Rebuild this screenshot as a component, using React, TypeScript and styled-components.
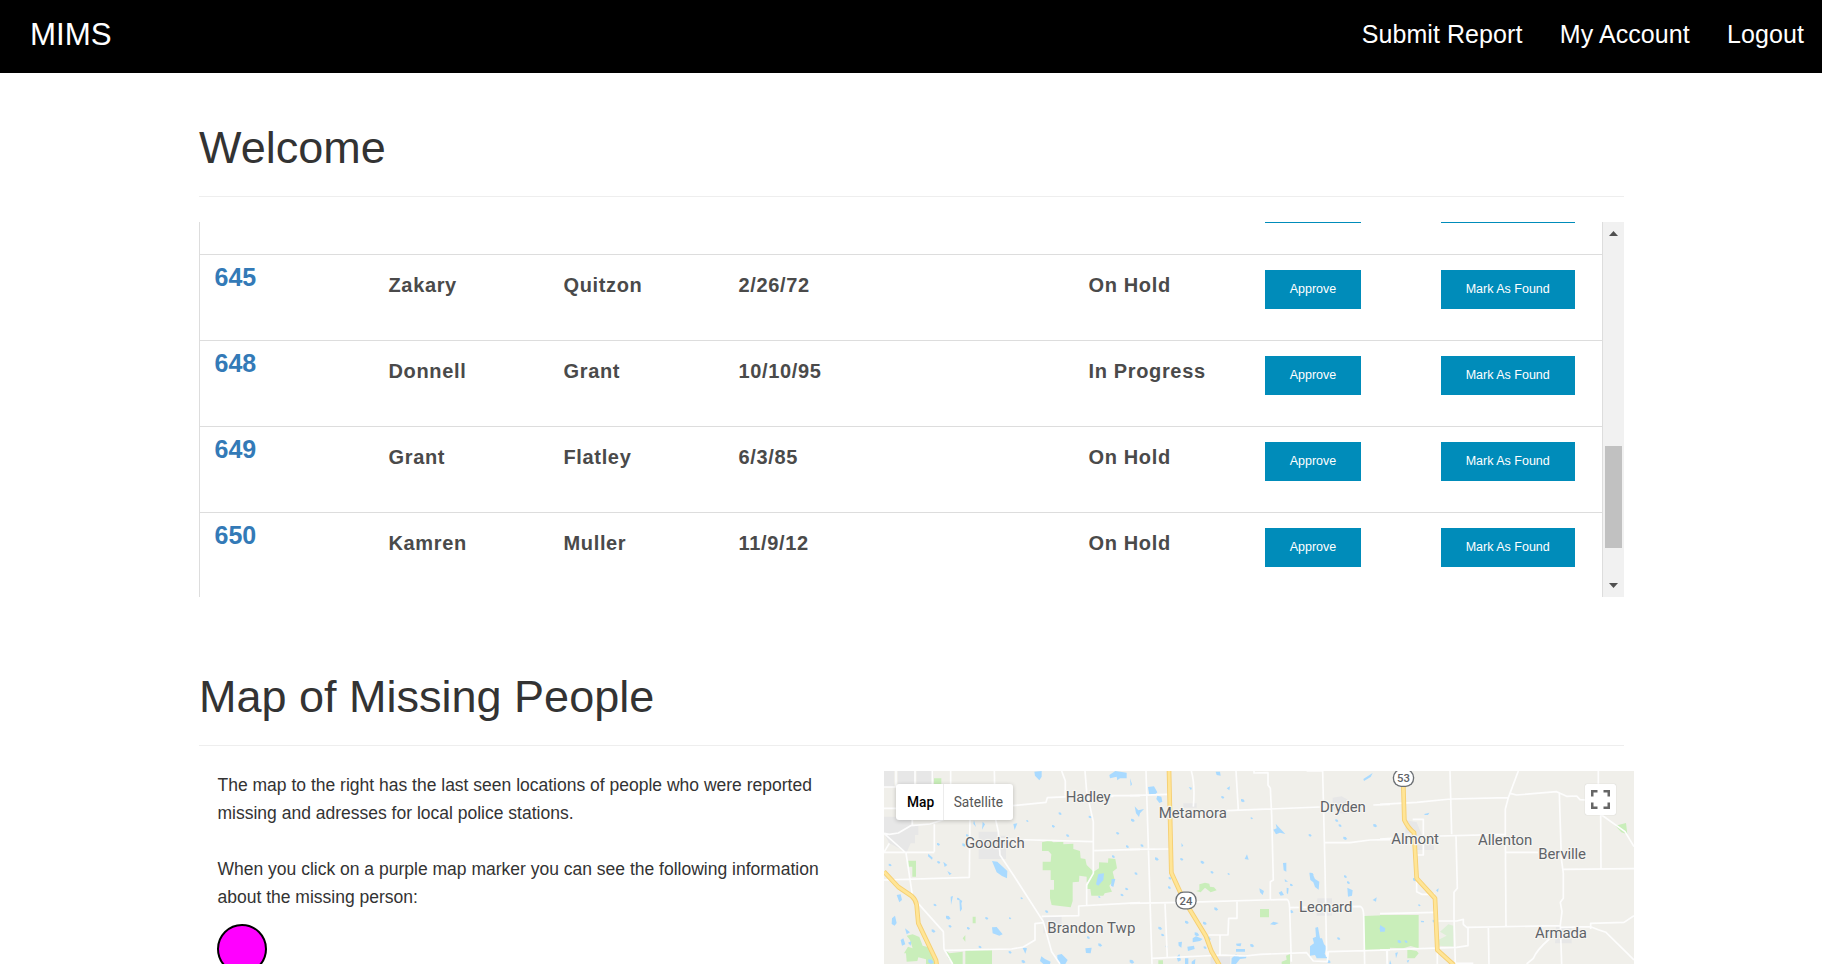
import React from 'react';
import styled, { createGlobalStyle } from 'styled-components';

const GlobalStyle = createGlobalStyle`
  *, *::before, *::after { box-sizing: border-box; }
  body {
    margin: 0;
    background: #fff;
    color: #333;
    font-family: 'Liberation Sans', Arial, sans-serif;
    overflow: hidden;
  }
`;

const Page = styled.div`
  height: 964px;
  overflow: hidden;
`;

const Navbar = styled.nav`
  display: flex;
  justify-content: space-between;
  align-items: center;
  height: 73px;
  padding: 0 18px 6px 30px;
  background: #000;
  color: #fff;
`;

const Brand = styled.span`
  padding-top: 2px;
  font-size: 31.25px;
  line-height: 40px;
`;

const NavLinks = styled.div`
  display: flex;
  gap: 37.25px;
`;

const NavLink = styled.a`
  font-size: 25px;
  line-height: 40px;
  letter-spacing: 0.08px;
  color: #fff;
`;

const Container = styled.main`
  width: 1425px;
  margin-left: 199px;
`;

const Heading = styled.h1<{ $top: number }>`
  margin: 0;
  padding: ${(p) => p.$top}px 0 23px;
  border-bottom: 1px solid #eee;
  font-size: 45px;
  font-weight: 400;
  line-height: 50px;
`;

const TableArea = styled.section`
  display: flex;
  height: 375px;
  margin-top: 25px;
  overflow: hidden;
`;

const Rows = styled.div`
  width: 1404px;
  border: solid #ddd;
  border-width: 0 1px;
`;

const Row = styled.div<{ $scrolled?: boolean }>`
  display: grid;
  grid-template-columns: 176.5px repeat(4, 175px) 176.5px 175.5px 163px;
  align-items: start;
  height: 86px;
  margin-top: ${(p) => (p.$scrolled ? -54 : 0)}px;
  padding-left: 12px;
  border-top: 1px solid #ddd;
`;

const CaseLink = styled.a`
  padding: 8px 0 0 2.5px;
  color: #337ab7;
  font-size: 25px;
  font-weight: 700;
  line-height: 28px;
`;

const Cell = styled.span`
  padding-top: 16px;
  color: #4a4a4a;
  font-size: 20px;
  font-weight: 700;
  line-height: 28px;
  letter-spacing: 0.65px;
`;

const ActionButton = styled.button<{ $width: number }>`
  justify-self: start;
  width: ${(p) => p.$width}px;
  height: 39px;
  margin: 15px 0 0;
  padding: 0 0 2px;
  border: 0;
  background: #008cba;
  color: #fff;
  font: 12.5px/36px 'Liberation Sans', Arial, sans-serif;
  white-space: nowrap;
`;

const ScrollTrack = styled.div`
  display: flex;
  flex-direction: column;
  align-items: center;
  justify-content: space-between;
  width: 21px;
  padding: 9px 0;
  background: #f1f1f1;
`;

const ScrollThumb = styled.div`
  width: 17px;
  height: 102px;
  margin: 175px 0 0;
  background: #c1c1c1;
`;

const ArrowSvg = styled.svg`
  display: block;
  flex: none;
`;

const MapSection = styled.section`
  display: flex;
  justify-content: space-between;
  width: 1435px;
  margin-top: 25px;
`;

const Description = styled.div`
  width: 640px;
  padding-left: 18px;
`;

const Paragraph = styled.p`
  margin: 0 0 28px;
  padding-left: 0.5px;
  font-size: 17.5px;
  line-height: 28px;
`;

const Marker = styled.div`
  width: 50px;
  height: 50px;
  margin-top: -15px;
  border: 2px solid #000;
  border-radius: 50%;
  background: #f0f;
`;

const MapFrame = styled.div`
  position: relative;
  width: 750px;
  height: 193px;
  overflow: hidden;
  background: #f0efea;
`;

const MapDrawing = styled.svg`
  display: block;
`;

const MapTypes = styled.div`
  position: absolute;
  left: 12px;
  top: 13px;
  display: flex;
  height: 36px;
  border-radius: 3px;
  background: #fff;
  box-shadow: 0 1px 4px rgba(0, 0, 0, 0.22);
`;

const MapType = styled.span<{ $active?: boolean }>`
  padding: ${(p) => (p.$active ? '0 9px 0 11px' : '0 10px 0 9.500px')};
  border-left: ${(p) => (p.$active ? '0' : '1px solid #ececec')};
  color: ${(p) => (p.$active ? '#000' : '#565656')};
  font: ${(p) => (p.$active ? 500 : 400)} 13.75px/36px Roboto, sans-serif;
`;

const Fullscreen = styled.button`
  position: absolute;
  right: 18px;
  top: 13px;
  display: grid;
  place-items: center;
  width: 31px;
  height: 31px;
  padding: 0;
  border: 0;
  border-radius: 2px;
  background: #fff;
  box-shadow: 0 0 1px rgba(0, 0, 0, 0.25);
`;

const MapLabel = styled.text`
  font: 45px Roboto, sans-serif;
  fill: #5f6368;
  stroke: #f6f5f1;
  stroke-width: 7px;
  stroke-linejoin: round;
  paint-order: stroke;
`;

const ShieldText = styled.text`
  font: 500 34px Roboto, sans-serif;
  fill: #5f6368;
  text-anchor: middle;
`;

type Person = { id: string; first: string; last: string; dob: string; status: string };

const people: Person[] = [
  { id: '645', first: 'Zakary', last: 'Quitzon', dob: '2/26/72', status: 'On Hold' },
  { id: '648', first: 'Donnell', last: 'Grant', dob: '10/10/95', status: 'In Progress' },
  { id: '649', first: 'Grant', last: 'Flatley', dob: '6/3/85', status: 'On Hold' },
  { id: '650', first: 'Kamren', last: 'Muller', dob: '11/9/12', status: 'On Hold' },
];

type Label = [name: string, x: number, y: number, width: number];

type Tile = {
  x: number;
  urban: string;
  parks: string;
  water: string;
  ponds: [number, number, number][];
  roads: string;
  highway: string;
  labels: Label[];
};

// The drawing is split in three tiles, each in units of a third of a pixel.
const tiles: Tile[] = [
  {
    x: -4,
    urban:
      'M12 18H42V66H12ZM54 18H104V66H54ZM110 18H160V57H110ZM12 155H94V180L115 178V210H105V235H92L80 262L28 235L12 205ZM296 200H355V212H378V282H296ZM490 452H545V478H520V505H490Z',
    parks:
      'M162 40H184V57H162ZM85 287H108V335H97V305H85ZM486 232L512 226L520 232L550 230V238L580 236V252L600 258L602 280L616 282L620 300L641 320L638 352H620V335L598 332L597 350L578 352V408L572 427L515 420L510 400V374H522V345H512V316H488V290H512L514 268L505 258H486ZM641 320L657 310V292L684 293L685 280L706 282L711 310L698 320L704 344L688 362L696 380L674 385L670 392H634L631 372H620L624 350L638 345ZM80 512L98 508L118 516L128 542L146 547L160 570L164 597H138V583L115 577L112 588L80 590L78 565H72L84 545L98 550L90 525ZM196 556L208 565L248 560V597H220L204 580ZM256 556H336V597H256ZM278 455H287V475H278ZM248 520L256 510V530Z',
    water:
      'M463 20L485 18V35L478 46L465 32ZM688 30L706 18L740 23V40H720L712 46L710 35L690 40ZM336 288L352 290L382 318L381 340L366 333L350 322ZM655 327L672 325L670 345L655 362L648 358ZM695 342L706 342L700 366L693 362ZM50 390L62 388L66 405L58 412ZM36 460L45 452L50 474L44 482L35 477ZM336 487L350 486L368 508L358 512L338 505ZM532 570L545 567L563 585L556 597H538L532 584ZM484 574L495 582L512 590L510 597H490L480 588ZM75 490L90 502L80 508ZM62 525L70 520L76 538L66 542ZM112 478L130 492L120 500ZM145 266L158 278L156 284L144 274ZM190 290L202 300L194 306ZM202 318L215 326L208 330ZM400 177L412 175L404 195ZM616 550L635 548L632 565L618 564ZM282 166L288 186L280 176ZM308 170L315 178L306 194ZM750 40L756 58L752 64ZM427 547L441 550L436 566ZM84 533L94 529L92 542ZM212 395L219 393L213 420ZM238 402L247 408L244 415L246 432L240 440Z',
    ponds: [
      [175, 238, 4], [176, 292, 4], [252, 240, 5], [262, 212, 4], [520, 184, 4], [563, 212, 4], [442, 168, 3],
      [540, 146, 4], [630, 156, 4], [758, 166, 5], [713, 205, 4], [742, 245, 4], [204, 458, 6], [210, 484, 4],
      [265, 490, 4], [320, 460, 4], [390, 460, 3], [160, 498, 5], [152, 590, 7], [740, 372, 4], [726, 390, 4],
      [625, 518, 4], [660, 540, 5], [755, 590, 6], [390, 562, 4], [300, 546, 4], [500, 440, 4], [425, 400, 3],
      [30, 300, 4], [165, 420, 4], [235, 402, 4], [700, 275, 4], [658, 396, 3], [430, 590, 5],
    ],
    roads:
      'M12 66H160M48 18V66M105 18V66M157 18V57M212 18V57M12 130H48M97 160V180M12 205L28 208L55 204L92 182L150 177L190 164M163 177V260M12 262H163M28 235L12 262M12 205L78 264L97 390L115 416L190 500L192 552L218 597M12 345L268 337L270 160M343 18L346 160L355 200L360 270L400 330L490 470L515 560L540 597M399 122L498 112L502 98L640 92H780M545 18L556 48V92M615 18L620 80L640 170V325L620 360V420M355 222L638 230M643 257L780 253M780 413L596 423V452L485 454M490 473L465 476V525L430 546L395 552L192 556M660 92L700 94',
    highway: 'M12 320L55 366L95 393Q108 405 110 420L115 475L168 586L170 600',
    labels: [
      ['Hadley', 557, 110, 135],
      ['Goodrich', 255, 250, 179],
      ['Brandon Twp', 502, 503, 264],
    ],
  },
  {
    x: 246,
    urban:
      'M160 115H200V128H160ZM608 98L635 94L660 108V145H625L608 125ZM562 400H606V452H560ZM242 575H300V597H242Z',
    parks:
      'M198 378L208 375V358L225 353L238 356L240 365L252 367L260 376L242 382L225 368L212 382ZM390 432H417V457H390ZM702 453L780 450V552L704 555ZM85 586H99V597H85ZM455 590L470 584L468 572L480 567V597H455Z',
    water:
      'M54 66L72 64L82 82L74 90H58ZM82 92L94 95L97 110L88 114L79 102ZM14 124L25 136L42 132L30 145L27 156L18 145ZM437 176L448 188L466 207L450 203L438 208L430 194L440 190ZM700 42L728 24L722 36L702 48ZM459 294L469 293L469 320L461 316ZM538 323L547 325L555 342L568 350L566 374L555 366L550 352L541 345ZM652 368L668 376L666 392L654 395ZM388 370L402 378L398 390L390 382ZM344 282L351 268L356 284ZM556 488L564 486L570 520H576L582 538L590 545L584 566L593 580H560L555 570L540 572V544L552 535L548 520L558 515ZM188 520L198 514L218 522L210 528L188 532ZM172 545L192 542L194 552L174 558ZM145 532L156 530L154 548L146 542ZM305 580L318 568L328 575L350 572L348 580L330 582L318 597H304ZM140 576L148 567L153 586L144 590ZM318 536L334 535L332 544L320 542ZM420 478L430 470L446 474L434 480ZM748 488L766 492L762 500L752 500ZM290 70L300 64L298 76ZM257 20L270 20L272 32L260 30ZM176 66L186 68L183 76ZM154 234L160 242L155 246ZM464 342L474 350L465 350ZM446 383L455 378L462 390L452 392ZM728 405L740 397L738 410ZM470 368L476 370L474 388L470 384ZM318 552H345V560H318ZM165 580H175V597H165ZM185 590L196 582L195 597H185Z',
    ponds: [
      [338, 107, 5], [278, 97, 4], [80, 282, 5], [155, 283, 4], [217, 292, 5], [246, 322, 4], [296, 327, 3],
      [365, 160, 3], [540, 211, 4], [620, 167, 4], [630, 182, 4], [645, 220, 5], [735, 182, 5], [545, 328, 5],
      [646, 335, 4], [258, 432, 5], [224, 475, 5], [170, 472, 5], [90, 490, 5], [98, 510, 4], [200, 508, 6],
      [225, 548, 4], [366, 542, 5], [626, 521, 4], [484, 440, 5], [118, 368, 4], [36, 242, 4], [18, 326, 4],
      [120, 340, 4], [655, 353, 4], [596, 590, 5], [235, 520, 6], [110, 545, 3], [484, 360, 4],
    ],
    roads:
      'M48 18L66 597M0 92L112 88M0 253L118 252M184 18Q196 60 190 125M318 18L325 135M372 18V24L414 23V60L421 70L425 150L430 345L421 350V402M290 137L570 126M730 120L780 118M530 18H578M578 18L585 310L590 575M585 233L660 233L720 225L780 224M0 415L160 412L470 403Q478 404 479 430L484 590M479 428L690 424Q700 426 701 450L704 597M105 415L112 580M66 580L280 570L345 573L390 568L530 563L550 588L592 590L595 560L780 555M270 570V510H236M270 510L294 510L296 460H321V410M772 555V597',
    highway: 'M117 14L124 323L160 402L228 514L244 558L268 600',
    labels: [
      ['Metamora', 86, 158, 205],
      ['Dryden', 570, 141, 137],
      ['Leonard', 507, 442, 160],
    ],
  },
  {
    x: 496,
    urban: 'M76 165L110 172L134 232L162 237V255H100V205H76ZM528 485H575V535H525Z',
    parks:
      'M0 450H116V550L92 543L70 550L30 548L0 552ZM82 553L110 558L116 565L104 580H82ZM706 182L738 174L742 208L724 202Z',
    water:
      'M133 147L148 143L144 150H134ZM168 376L176 370L174 382ZM0 480L16 490L14 500H0ZM46 564L54 562L48 580ZM30 585L34 597H28ZM122 467L132 468V472H124ZM80 587L88 584L84 594Z',
    ponds: [
      [104, 344, 5], [118, 421, 3], [163, 469, 5], [58, 530, 5], [78, 530, 4],
    ],
    roads:
      'M0 118L110 112L212 102L385 98L415 18M210 18L215 208M385 98L376 132V205L378 484M180 213L376 208M0 222L35 220M390 85L410 90L530 80L560 94L590 93L600 104L616 105M538 85L544 280L550 325V400L541 412L546 440L541 480L545 597M378 262H475M548 313L762 311M655 18V57M662 148L663 311M665 150L735 200L762 245M228 213L232 370L222 382V460L226 597M98 163H130V270H112M110 345V380L125 388H165M0 446L166 442M170 468H230L250 463V478L260 487L540 482M542 487L632 485L655 494L678 502L762 585M632 492V475L732 472L762 452M508 522Q470 555 460 580L440 597M325 487L327 597M264 487V542L230 547L0 555M20 555L22 597M172 555V597M222 595H280',
    highway: 'M70 62L73 165Q85 190 102 203L110 340L165 400L172 555L222 600',
    labels: [
      ['Almont', 34, 237, 143],
      ['Allenton', 294, 240, 163],
      ['Berville', 475, 282, 143],
      ['Armada', 465, 520, 156],
    ],
  },
];

function MapTile({ tile }: { tile: Tile }) {
  return (
    <g transform={`translate(${tile.x} -6) scale(.33333)`}>
      <path d={tile.urban} fill="#e7e7e7" />
      <path d={tile.parks} fill="#c9eeba" />
      {tile.x === 496 && (
        <path d="M180 500L205 478L220 482V545L178 542L174 525L200 512Z" fill="#dcefd5" />
      )}
      <path d={tile.water} fill="#a9daff" />
      {tile.ponds.map(([x, y, r]) => (
        <path
          key={`${x}-${y}`}
          d={`M${x - r} ${y - r}L${x + r * 0.4} ${y - r * 0.8}L${x + r * 1.3} ${y + r * 0.4}L${x + r * 0.2} ${y + r}L${x - r} ${y + r * 0.3}Z`}
          fill="#a9daff"
        />
      ))}
      <path d={tile.roads} fill="none" stroke="#fdfdfd" strokeWidth="5" strokeLinejoin="round" />
      <path d={tile.highway} fill="none" stroke="#f6cf72" strokeWidth="14" strokeLinejoin="round" />
      <path d={tile.highway} fill="none" stroke="#ffe596" strokeWidth="8.5" strokeLinejoin="round" />
    </g>
  );
}

function MapLabels({ tile }: { tile: Tile }) {
  return (
    <g transform={`translate(${tile.x} -6) scale(.33333)`}>
      {tile.labels.map(([name, x, y, width]) => (
        <MapLabel key={name} x={x} y={y} textLength={width}>
          {name}
        </MapLabel>
      ))}
    </g>
  );
}

function Shield({ x, y, route }: { x: number; y: number; route: string }) {
  return (
    <g transform={`translate(${x} ${y}) scale(.33333)`}>
      <rect x="-32" y="-27" width="64" height="54" rx="25" fill="#6b6f73" />
      <rect x="-28" y="-23" width="56" height="46" rx="21" fill="#fff" />
      <ShieldText x="0" y="12">{route}</ShieldText>
    </g>
  );
}

function Arrow({ down }: { down?: boolean }) {
  return (
    <ArrowSvg width="9" height="5" viewBox="0 0 9 5">
      <path d={down ? 'M0 0H9L4.500 5Z' : 'M0 5H9L4.500 0Z'} fill="#505050" />
    </ArrowSvg>
  );
}

function Actions({ labelled = true }: { labelled?: boolean }) {
  return (
    <>
      <ActionButton $width={96}>{labelled && 'Approve'}</ActionButton>
      <ActionButton $width={134.5}>{labelled && 'Mark As Found'}</ActionButton>
    </>
  );
}

function PersonRow({ person }: { person: Person }) {
  return (
    <Row>
      <CaseLink>{person.id}</CaseLink>
      <Cell>{person.first}</Cell>
      <Cell>{person.last}</Cell>
      <Cell>{person.dob}</Cell>
      <Cell />
      <Cell>{person.status}</Cell>
      <Actions />
    </Row>
  );
}

export default function App() {
  return (
    <Page>
      <GlobalStyle />
      <Navbar>
        <Brand>MIMS</Brand>
        <NavLinks>
          <NavLink>Submit Report</NavLink>
          <NavLink>My Account</NavLink>
          <NavLink>Logout</NavLink>
        </NavLinks>
      </Navbar>
      <Container>
        <Heading $top={50}>Welcome</Heading>
        <TableArea>
          <Rows>
            <Row $scrolled>
              <Cell />
              <Cell />
              <Cell />
              <Cell />
              <Cell />
              <Cell />
              <Actions labelled={false} />
            </Row>
            {people.map((person) => (
              <PersonRow key={person.id} person={person} />
            ))}
          </Rows>
          <ScrollTrack>
            <Arrow />
            <ScrollThumb />
            <Arrow down />
          </ScrollTrack>
        </TableArea>
        <Heading $top={75}>Map of Missing People</Heading>
        <MapSection>
          <Description>
            <Paragraph>
              The map to the right has the last seen locations of people who were reported
              <br />
              missing and adresses for local police stations.
            </Paragraph>
            <Paragraph>
              When you click on a purple map marker you can see the following information
              <br />
              about the missing person:
            </Paragraph>
            <Marker />
          </Description>
          <MapFrame>
            <MapDrawing width="750" height="193" viewBox="0 0 750 193">
              {tiles.map((tile) => (
                <MapTile key={tile.x} tile={tile} />
              ))}
              {tiles.map((tile) => (
                <MapLabels key={tile.x} tile={tile} />
              ))}
              <Shield x={302} y={129.5} route="24" />
              <Shield x={519.5} y={7} route="53" />
            </MapDrawing>
            <MapTypes>
              <MapType $active>Map</MapType>
              <MapType>Satellite</MapType>
            </MapTypes>
            <Fullscreen aria-label="Toggle fullscreen">
              <svg width="19" height="19" viewBox="0 0 19 19" fill="#666">
                <path d="M0 0v6.500h2.500v-4h4V0H0zm19 0h-6.500v2.500h4v4H19V0zm-2.500 16.500h-4V19H19v-6.500h-2.500v4zM2.500 12.500H0V19h6.500v-2.500h-4v-4z" />
              </svg>
            </Fullscreen>
          </MapFrame>
        </MapSection>
      </Container>
    </Page>
  );
}
